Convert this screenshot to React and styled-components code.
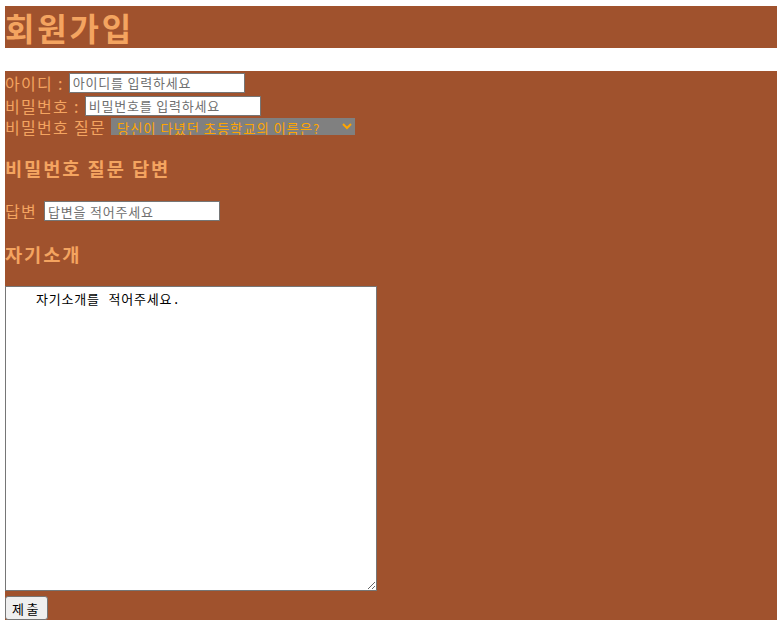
import React from 'react';
import styled, { createGlobalStyle } from 'styled-components';

const GlobalStyle = createGlobalStyle`
  body {
    margin: 0;
    background-color: #FFFFFF;
    font-family: "Noto Sans CJK KR", sans-serif;
  }
`;

const Page = styled.div`
  display: flex;
  flex-direction: column;
  gap: 23px;
  padding: 6px 0 0 5px;
`;

const Header = styled.h1`
  margin: 0;
  height: 42px;
  line-height: 42px;
  background-color: #A0522D;
  color: #F4A460;
  font-family: "Noto Sans CJK KR", sans-serif;
  font-size: 32px;
  font-weight: 700;
  letter-spacing: 2.8px;
`;

const Form = styled.form`
  display: flex;
  flex-direction: column;
  align-items: flex-start;
  background-color: #A0522D;
  color: #F4A460;
  font-size: 16px;
  letter-spacing: 1.3px;
`;

const Row = styled.div`
  display: flex;
  align-items: center;
  gap: ${(p) => p.$gap || 5}px;
  height: ${(p) => p.$height || 23}px;
`;

const Label = styled.span`
  line-height: 18px;
`;

const TextInput = styled.input`
  box-sizing: border-box;
  width: 176px;
  height: 20px;
  padding: 1px 3px;
  border: 1px solid #767676;
  border-radius: 0;
  background: #FFFFFF;
  font-family: "Noto Sans CJK KR", sans-serif;
  font-size: 13px;
  letter-spacing: 0.8px;
  color: #000000;
  &::placeholder {
    color: #6f6f6f;
  }
`;

const Select = styled.select`
  box-sizing: border-box;
  width: 244px;
  height: 17px;
  padding: 0 2px;
  border: none;
  border-radius: 0;
  background-color: #808080;
  color: #FFA500;
  font-family: "Noto Sans CJK KR", sans-serif;
  font-size: 13.33px;
  letter-spacing: 0.9px;
`;

const SubTitle = styled.h3`
  margin: 19px 0;
  height: 26px;
  line-height: 26px;
  font-size: 18.72px;
  font-weight: 700;
  letter-spacing: 1.9px;
`;

const Intro = styled.textarea`
  box-sizing: border-box;
  width: 372px;
  height: 305px;
  padding: 2px;
  border: 1px solid #767676;
  border-radius: 0;
  text-indent: 28px;
  font-family: "Liberation Mono", "Noto Sans CJK KR", monospace;
  font-size: 13px;
  letter-spacing: 0.8px;
  color: #000000;
  resize: both;
`;

const SubmitButton = styled.button`
  margin-top: 5px;
  height: 24px;
  padding: 1px 6px;
  border: 1px solid #767676;
  border-radius: 3px;
  background-color: #EFEFEF;
  color: #000000;
  font-family: "Noto Sans CJK KR", sans-serif;
  font-size: 13px;
  letter-spacing: 2.5px;
`;

function App() {
  return (
    <>
      <GlobalStyle />
      <Page>
        <Header>회원가입</Header>
        <Form onSubmit={(e) => e.preventDefault()}>
          <Row>
            <Label>아이디 :</Label>
            <TextInput placeholder="아이디를 입력하세요" />
          </Row>
          <Row>
            <Label>비밀번호 :</Label>
            <TextInput type="password" placeholder="비밀번호를 입력하세요" />
          </Row>
          <Row $height={19}>
            <Label>비밀번호 질문</Label>
            <Select defaultValue="school">
              <option value="school">당신이 다녔던 초등학교의 이름은?</option>
            </Select>
          </Row>
          <SubTitle>비밀번호 질문 답변</SubTitle>
          <Row $height={22} $gap={7}>
            <Label>답변</Label>
            <TextInput placeholder="답변을 적어주세요" />
          </Row>
          <SubTitle>자기소개</SubTitle>
          <Intro defaultValue="자기소개를 적어주세요." />
          <SubmitButton type="submit">제출</SubmitButton>
        </Form>
      </Page>
    </>
  );
}

export default App;
